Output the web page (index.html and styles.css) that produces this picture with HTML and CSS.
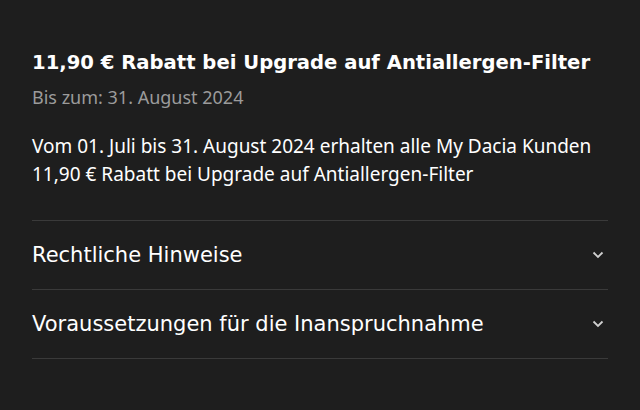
FILE: index.html
```html
<!DOCTYPE html>
<html lang="de">
<head>
    <meta charset="UTF-8">
    <meta name="viewport" content="width=device-width, initial-scale=1.0">
    <title>Angebot</title>
    <link rel="stylesheet" href="styles.css">
</head>
<body>
    <div class="offer">
        <h1 class="offer-title">11,90 € Rabatt bei Upgrade auf Antiallergen-Filter</h1>
        <p class="offer-date">Bis zum: 31. August 2024</p>
        <p class="offer-text">Vom 01. Juli bis 31. August 2024 erhalten alle My Dacia Kunden 11,90 € Rabatt bei Upgrade auf Antiallergen-Filter</p>

        <div class="accordion">
            <div class="accordion-item">
                <span>Rechtliche Hinweise</span>
                <svg class="chevron" width="12" height="8" viewBox="0 0 12 8"><path d="M1.5 1.5 L6 6 L10.5 1.5" fill="none" stroke="#cfcfcf" stroke-width="1.8"/></svg>
            </div>
            <div class="accordion-item">
                <span>Voraussetzungen für die Inanspruchnahme</span>
                <svg class="chevron" width="12" height="8" viewBox="0 0 12 8"><path d="M1.5 1.5 L6 6 L10.5 1.5" fill="none" stroke="#cfcfcf" stroke-width="1.8"/></svg>
            </div>
        </div>
    </div>
</body>
</html>
```

FILE: styles.css
```css
html, body {
    background-color: #1e1e1e;
}
body {
    margin: 0;
    color: #ffffff;
    font-family: "Noto Sans", sans-serif;
}
.offer {
    padding: 49px 32px 0 32px;
}
.offer-title {
    margin: 0;
    font-family: "DejaVu Sans", sans-serif;
    font-size: 19.6px;
    font-weight: bold;
    line-height: 28px;
}
.offer-date {
    margin: 8px 0 0 0;
    color: #9b9b9b;
    font-size: 18px;
    line-height: 24px;
}
.offer-text {
    margin: 23px 0 0 0;
    font-size: 19px;
    line-height: 28px;
}
.accordion {
    margin-top: 32px;
}
.accordion-item {
    display: flex;
    align-items: center;
    justify-content: space-between;
    height: 68px;
    border-top: 1px solid #3a3a3a;
    font-family: "DejaVu Sans", sans-serif;
    font-size: 21px;
}
.accordion-item:last-child {
    border-bottom: 1px solid #3a3a3a;
}
.chevron {
    margin-right: 4px;
}
```
